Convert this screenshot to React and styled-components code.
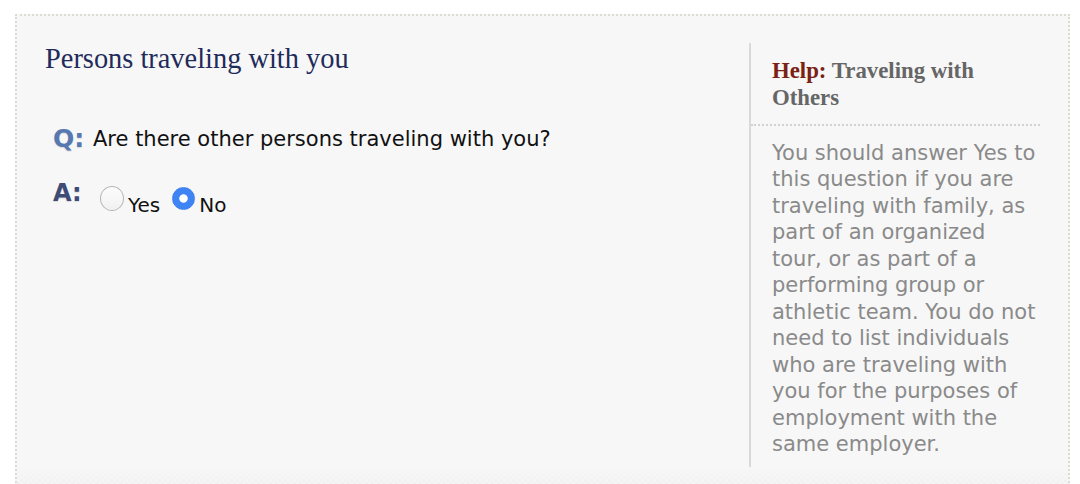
import React from "react";
import styled, { createGlobalStyle } from "styled-components";

const Global = createGlobalStyle`
  html, body { margin: 0; padding: 0; background: #ffffff; }
  body { font-family: "DejaVu Sans", Verdana, sans-serif; }
  * { box-sizing: border-box; }
`;

const Page = styled.div`
  height: 484px;
  overflow: hidden;
  padding: 14px 10px 0 15px;
`;

const Box = styled.div`
  height: 480px;
  border: 2px dotted #dedcd0;
  border-bottom: none;
  background: #f7f7f7;
  display: flex;
  flex-direction: column;
`;

const Content = styled.div`
  display: flex;
  padding-top: 27px;
`;

const Main = styled.div`
  flex: 1;
  padding-left: 28px;
`;

const Heading = styled.h1`
  margin: 0;
  font-family: "Liberation Serif", "Times New Roman", serif;
  font-weight: normal;
  font-size: 28.4px;
  line-height: 32px;
  color: #1f2b5b;
`;

const QARow = styled.div`
  display: flex;
  align-items: flex-start;
  margin-top: ${(p) => p.$top}px;
  padding-left: 8px;
`;

const Tag = styled.span`
  font-family: "DejaVu Sans", Verdana, sans-serif;
  font-weight: bold;
  font-size: ${(p) => p.$size}px;
  line-height: 26px;
  color: ${(p) => p.$color};
  text-shadow: 0 1px 1px rgba(0, 0, 0, 0.12);
  width: ${(p) => p.$width}px;
  flex: none;
`;

const Question = styled.span`
  font-size: 21px;
  line-height: 26px;
  color: #111;
`;

const Choices = styled.div`
  display: flex;
  align-items: flex-end;
  padding-top: 6px;
`;

const Choice = styled.label`
  display: flex;
  align-items: flex-end;
  margin-right: 12px;
  font-size: 20px;
  line-height: 12px;
  color: #111;
`;

const Radio = styled.input.attrs({ type: "radio" })`
  appearance: none;
  margin: 0 4px 0 0;
  width: 24px;
  height: 25px;
  border-radius: 50%;
  flex: none;
  border: 1px solid #b4b4b4;
  background: linear-gradient(#fdfdfd, #f0f0f0);
  &:checked {
    width: 23px;
    height: 23px;
    margin-bottom: 1px;
    border-color: #3d80f0;
    background: radial-gradient(circle, #ffffff 0 3.8px, #3f84f4 4.6px);
  }
`;

const Side = styled.aside`
  width: 319px;
  flex: none;
  border-left: 2px solid #d9d9d9;
  padding: 14px 28px 18px 0;
`;

const HelpHead = styled.div`
  padding: 0 0 13px 21px;
  border-bottom: 2px dotted #d2d2d2;
  font-family: "Liberation Serif", "Times New Roman", serif;
  font-weight: bold;
  font-size: 22.8px;
  line-height: 27px;
  color: #666666;
`;

const HelpLabel = styled.span`
  color: #7b2112;
`;

const HelpText = styled.p`
  margin: 14px 0 0 21px;
  width: 269.4px;
  font-size: 21px;
  line-height: 26.45px;
  color: #8a8a8a;
`;

const Fade = styled.div`
  flex: 1;
  margin-top: -8px;
  background:
    linear-gradient(#f7f7f7, rgba(247, 247, 247, 0.2)),
    repeating-conic-gradient(#eaeaea 0 25%, #f4f4f4 0 50%) 0 0 / 6px 6px;
`;

export default function App() {
  return (
    <>
      <Global />
      <Page>
        <Box>
          <Content>
            <Main>
              <Heading>Persons traveling with you</Heading>
              <QARow $top={51}>
                <Tag $size={25} $width={40} $color="#5878b0">Q:</Tag>
                <Question>Are there other persons traveling with you?</Question>
              </QARow>
              <QARow $top={28}>
                <Tag $size={24} $width={47} $color="#3e4b75">A:</Tag>
                <Choices>
                  <Choice>
                    <Radio name="others" />
                    Yes
                  </Choice>
                  <Choice>
                    <Radio name="others" defaultChecked />
                    No
                  </Choice>
                </Choices>
              </QARow>
            </Main>
            <Side>
              <HelpHead>
                <HelpLabel>Help:</HelpLabel> Traveling with Others
              </HelpHead>
              <HelpText>
                You should answer Yes to this question if you are traveling with
                family, as part of an organized tour, or as part of a performing
                group or athletic team. You do not need to list individuals who
                are traveling with you for the purposes of employment with the
                same employer.
              </HelpText>
            </Side>
          </Content>
          <Fade />
        </Box>
      </Page>
    </>
  );
}
